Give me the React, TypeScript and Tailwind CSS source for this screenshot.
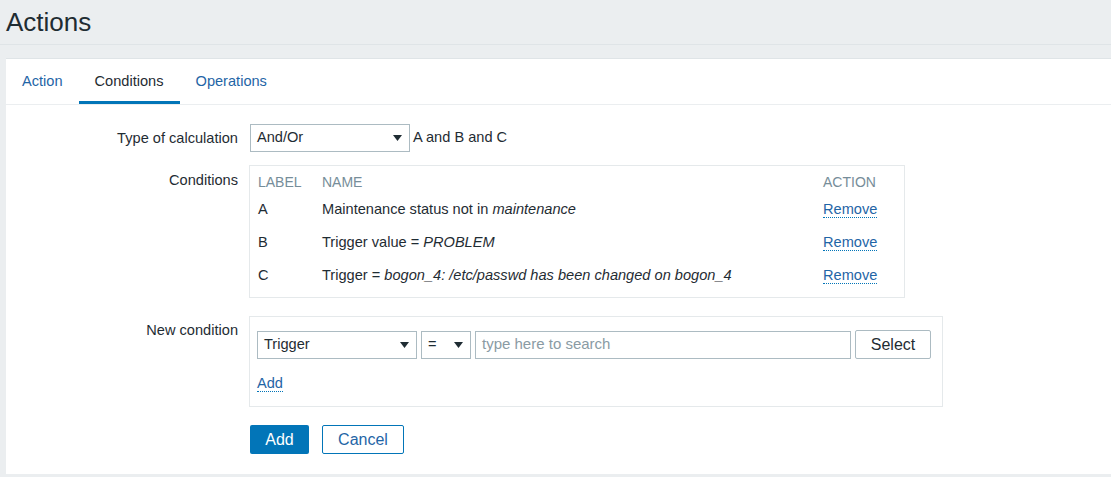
import type { ReactNode } from "react";

const conditions = [
  { label: "A", name: "Maintenance status not in ", value: "maintenance" },
  { label: "B", name: "Trigger value = ", value: "PROBLEM" },
  { label: "C", name: "Trigger = ", value: "bogon_4: /etc/passwd has been changed on bogon_4" },
];

function Caret() {
  return (
    <svg width="9" height="6" viewBox="0 0 9 6" className="shrink-0">
      <path d="M0 0h9L4.5 6z" fill="#1f2c33" />
    </svg>
  );
}

function SelectBox({ value, className }: { value: string; className: string }) {
  return (
    <div
      className={`flex h-[28px] items-center justify-between border border-[#acbbc2] bg-white pl-[6px] pr-[7px] text-[14.6px] text-[#1f2c33] ${className}`}
    >
      <span>{value}</span>
      <Caret />
    </div>
  );
}

function DottedLink({ children }: { children: ReactNode }) {
  return (
    <span className="border-b border-dotted border-[#0275b8] leading-[17px] text-[#1f65a6]">{children}</span>
  );
}

function Row({ label, labelClass, children, className }: { label?: string; labelClass?: string; children: ReactNode; className?: string }) {
  return (
    <div className={`flex gap-[12px] ${className ?? ""}`}>
      <div className={`w-[232px] shrink-0 text-right text-[14.6px] text-[#1f2c33] ${labelClass ?? ""}`}>{label}</div>
      <div className="min-w-0">{children}</div>
    </div>
  );
}

export default function App() {
  const tabs = ["Action", "Conditions", "Operations"];
  return (
    <div className="flex h-[477px] w-[1111px] flex-col overflow-hidden bg-[#ebeef0] font-['Liberation_Sans',Arial,sans-serif] text-[#1f2c33]">
      <div className="flex h-[45px] shrink-0 items-center border-b border-[#dfe4e7] pb-[1px] pl-[6px]">
        <h1 className="text-[26px] leading-none">Actions</h1>
      </div>

      <div className="ml-[6px] mt-[13px] flex-1 border-t border-[#dfe4e7] bg-white">
        <div className="flex h-[46px] border-b border-[#ebeef0]">
          {tabs.map((t) => (
            <div
              key={t}
              className={`flex items-center border-b-[3px] px-[16px] pt-[4px] text-[14.6px] ${
                t === "Conditions" ? "border-[#0275b8] text-[#1f2c33]" : "border-transparent text-[#1f65a6]"
              }`}
            >
              {t}
            </div>
          ))}
        </div>

        <div className="pt-[19px]">
          <Row label="Type of calculation" labelClass="leading-[28px]">
            <div className="flex items-center gap-[3px]">
              <SelectBox value="And/Or" className="w-[160px]" />
              <span className="text-[14.6px]">A and B and C</span>
            </div>
          </Row>

          <Row label="Conditions" labelClass="pt-[5px] leading-[20px]" className="mt-[13px]">
            <div className="-ml-px w-[656px] border border-[#e5e9eb] px-[8px] py-[5px] text-[14.6px]">
              <div className="grid h-[22px] grid-cols-[64px_1fr_73px] items-center text-[14px] text-[#768d99]">
                <span>LABEL</span>
                <span>NAME</span>
                <span>ACTION</span>
              </div>
              {conditions.map((c) => (
                <div key={c.label} className="grid h-[33px] grid-cols-[64px_1fr_73px] items-center pt-[1px]">
                  <span>{c.label}</span>
                  <span>
                    {c.name}
                    <i>{c.value}</i>
                  </span>
                  <span>
                    <DottedLink>Remove</DottedLink>
                  </span>
                </div>
              ))}
            </div>
          </Row>

          <Row label="New condition" labelClass="pt-[4px] leading-[20px]" className="mt-[18px]">
            <div className="-ml-px w-[694px] border border-[#e5e9eb] pb-[13px] pl-[7px] pt-[13px]">
              <div className="flex items-center">
                <SelectBox value="Trigger" className="w-[160px]" />
                <SelectBox value="=" className="ml-[4px] w-[50px]" />
                <div className="ml-[4px] flex h-[28px] w-[376px] items-center border border-[#acbbc2] px-[6px] text-[15px] text-[#8a9ba4]">
                  type here to search
                </div>
                <div className="ml-[4px] flex h-[29px] w-[76px] items-center justify-center rounded-[2px] border border-[#acbbc2] bg-white text-[16px] text-[#1f2c33]">
                  Select
                </div>
              </div>
              <div className="mt-[14px] text-[14.6px] leading-[20px]">
                <DottedLink>Add</DottedLink>
              </div>
            </div>
          </Row>

          <Row className="mt-[18px]">
            <div className="flex gap-[13px] pb-[20px]">
              <div className="flex h-[29px] w-[59px] items-center justify-center rounded-[2px] bg-[#0275b8] text-[16px] text-white">
                Add
              </div>
              <div className="flex h-[29px] w-[82px] items-center justify-center rounded-[2px] border border-[#0275b8] bg-white text-[16px] text-[#1f65a6]">
                Cancel
              </div>
            </div>
          </Row>
        </div>
      </div>
      <div className="h-[5px] shrink-0" />
    </div>
  );
}
